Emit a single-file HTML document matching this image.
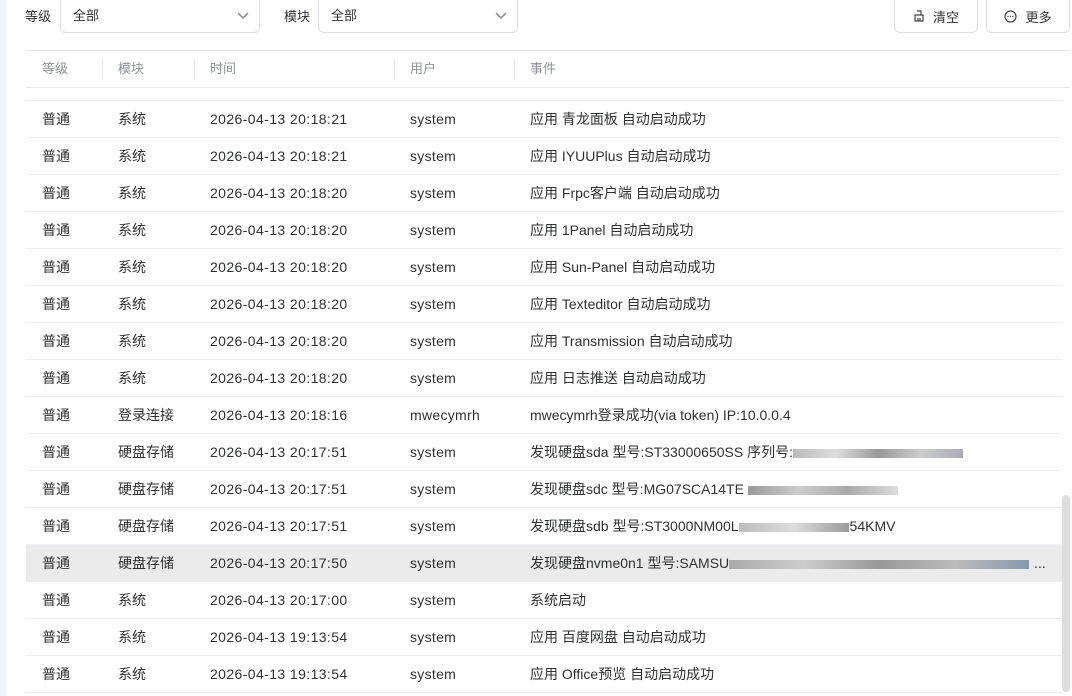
<!DOCTYPE html>
<html><head><meta charset="utf-8"><style>
*{margin:0;padding:0;box-sizing:border-box}
body{width:1072px;height:696px;overflow:hidden;background:#fff;font-family:"Liberation Sans","Noto Sans CJK SC",sans-serif;font-size:14px;color:#303133;position:relative}
.strip{position:absolute;left:0;top:0;width:6px;height:696px;background:#f2f3f5}
.lbl{position:absolute;top:0;line-height:33px;font-size:13px;color:#303133}
.sel{position:absolute;top:0;height:33px;line-height:31px;border:1px solid #dcdfe6;border-top:none;border-radius:0 0 6px 6px;padding:0 12px;font-size:13px}
.sel svg{position:absolute;right:10px;top:12px}
.btn{position:absolute;top:0;height:33px;border:1px solid #dcdfe6;border-top:none;border-radius:0 0 6px 6px;font-size:13px;display:flex;align-items:center;justify-content:center;gap:8px}
.hdr{position:absolute;left:26px;top:50px;width:1044px;height:38px;border-top:1px solid #e4e7ed;border-bottom:1px solid #e4e7ed;color:#909399;font-size:13px}
.hdr span{position:absolute;top:0;line-height:36px}
.sep{position:absolute;top:9px;width:1px;height:20px;background:#e4e7ed}
.row{position:absolute;left:26px;width:1036px;height:37px;border-bottom:1px solid #ebeef5}
.row span{position:absolute;top:0;line-height:36px;white-space:nowrap}
.row span.t{letter-spacing:.4px}
.row span.u{letter-spacing:.3px}
.hl{background:#ebebeb}
.bl{display:inline-block;height:9px;vertical-align:middle;margin-right:1px}
.sb{position:absolute;left:1062px;top:495px;width:8px;height:197px;background:#dedede;border-radius:4px}
</style></head><body>
<div class="strip"></div>
<div class="lbl" style="left:25px">等级</div>
<div class="sel" style="left:60px;width:200px">全部<svg width="12" height="8"><path d="M1 1l5 5 5-5" stroke="#888" stroke-width="1.5" fill="none"/></svg></div>
<div class="lbl" style="left:284px">模块</div>
<div class="sel" style="left:318px;width:200px">全部<svg width="12" height="8"><path d="M1 1l5 5 5-5" stroke="#888" stroke-width="1.5" fill="none"/></svg></div>
<div class="btn" style="left:894px;width:84px"><svg width="12" height="12"><path d="M4 1h4v4M2 5h8v6H2zM5 8v3M7 8v3" stroke="#444" stroke-width="1.2" fill="none"/></svg>清空</div>
<div class="btn" style="left:986px;width:84px"><svg width="13" height="13"><circle cx="6.5" cy="6.5" r="5.5" stroke="#444" stroke-width="1.2" fill="none"/><circle cx="4" cy="6.5" r=".7" fill="#444"/><circle cx="6.5" cy="6.5" r=".7" fill="#444"/><circle cx="9" cy="6.5" r=".7" fill="#444"/></svg>更多</div>
<div class="hdr"><span style="left:16px">等级</span><div class="sep" style="left:76px"></div><span style="left:92px">模块</span><div class="sep" style="left:168px"></div><span style="left:184px">时间</span><div class="sep" style="left:368px"></div><span style="left:384px">用户</span><div class="sep" style="left:488px"></div><span style="left:504px">事件</span></div>
<div class="row" style="top:89px;height:12px"></div>
<div id="rows"></div>
<div class="sb"></div>
<script>
var d=[["系统","2026-04-13 20:18:21","system","应用 青龙面板 自动启动成功"],
["系统","2026-04-13 20:18:21","system","应用 IYUUPlus 自动启动成功"],
["系统","2026-04-13 20:18:20","system","应用 Frpc客户端 自动启动成功"],
["系统","2026-04-13 20:18:20","system","应用 1Panel 自动启动成功"],
["系统","2026-04-13 20:18:20","system","应用 Sun-Panel 自动启动成功"],
["系统","2026-04-13 20:18:20","system","应用 Texteditor 自动启动成功"],
["系统","2026-04-13 20:18:20","system","应用 Transmission 自动启动成功"],
["系统","2026-04-13 20:18:20","system","应用 日志推送 自动启动成功"],
["登录连接","2026-04-13 20:18:16","mwecymrh","mwecymrh登录成功(via token) IP:10.0.0.4"],
["硬盘存储","2026-04-13 20:17:51","system","发现硬盘sda 型号:ST33000650SS 序列号:<i class=bl style='width:170px;background:linear-gradient(90deg,#bbb,#ddd,#999,#ccc,#aab)'></i>"],
["硬盘存储","2026-04-13 20:17:51","system","发现硬盘sdc 型号:MG07SCA14TE <i class=bl style='width:150px;background:linear-gradient(90deg,#999,#ccc,#aaa,#ddd)'></i>"],
["硬盘存储","2026-04-13 20:17:51","system","发现硬盘sdb 型号:ST3000NM00L<i class=bl style='width:110px;background:linear-gradient(90deg,#bbb,#ddd,#999)'></i>54KMV"],
["硬盘存储","2026-04-13 20:17:50","system","发现硬盘nvme0n1 型号:SAMSU<i class=bl style='width:300px;background:linear-gradient(90deg,#aaa,#ccc,#999,#bbb,#8899aa)'></i> ..."],
["系统","2026-04-13 20:17:00","system","系统启动"],
["系统","2026-04-13 19:13:54","system","应用 百度网盘 自动启动成功"],
["系统","2026-04-13 19:13:54","system","应用 Office预览 自动启动成功"]];
var h="";d.forEach(function(r,i){h+='<div class="row'+(i==12?' hl':'')+'" style="top:'+(101+i*37)+'px"><span style="left:16px">普通</span><span style="left:92px">'+r[0]+'</span><span class="t" style="left:184px">'+r[1]+'</span><span class="u" style="left:384px">'+r[2]+'</span><span style="left:504px">'+r[3]+'</span></div>'});
document.getElementById("rows").innerHTML=h;
</script>
</body></html>
